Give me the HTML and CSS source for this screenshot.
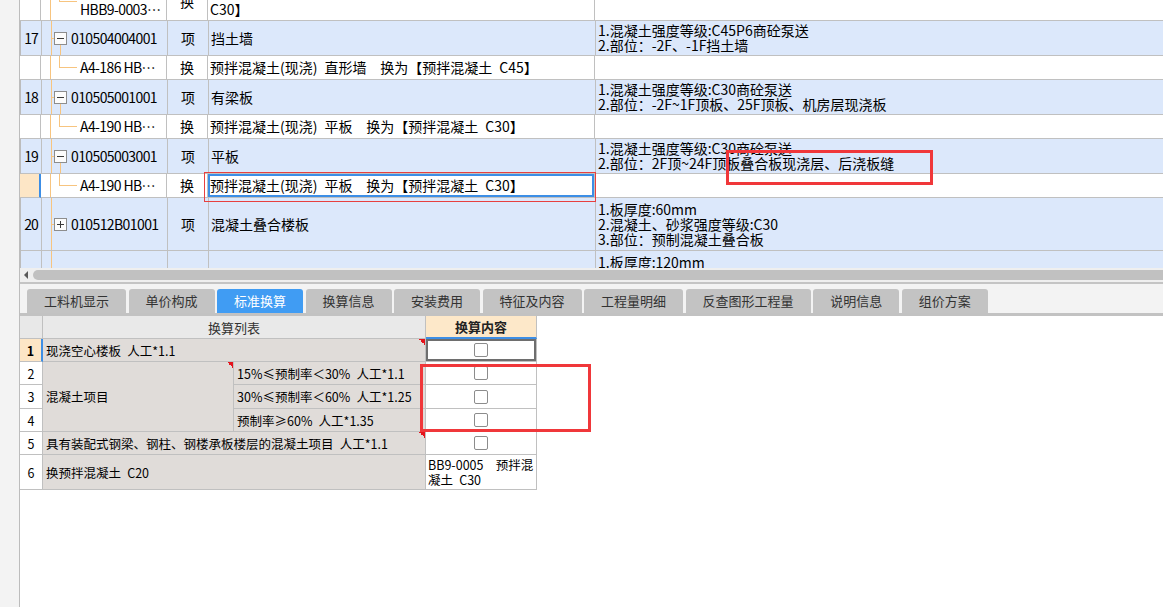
FILE: index.html
```html
<!DOCTYPE html>
<html lang="zh-CN">
<head>
<meta charset="utf-8">
<title>标准换算</title>
<link rel="stylesheet" href="styles.css">
</head>
<body>
<div class="app">
  <div class="side"></div>
  <div class="main">
    <div class="grid-view">
      <div class="row sub first">
        <div class="c-num"></div>
        <div class="c-code low"><span class="ln">HBB9-0003…</span></div>
        <div class="c-unit">换</div>
        <div class="c-desc low"><span class="ln">C30】</span></div>
        <div class="c-feat"></div>
      </div>
      <div class="row main open">
        <div class="c-num">17</div>
        <div class="c-code"><span class="exp"></span><span class="ln">010504004001</span></div>
        <div class="c-unit">项</div>
        <div class="c-desc"><span class="ln">挡土墙</span></div>
        <div class="c-feat"><span class="ln">1.混凝土强度等级:C45P6商砼泵送</span><span class="ln">2.部位：-2F、-1F挡土墙</span></div>
      </div>
      <div class="row sub">
        <div class="c-num"></div>
        <div class="c-code"><span class="ln">A4-186 HB…</span></div>
        <div class="c-unit">换</div>
        <div class="c-desc"><span class="ln">预拌混凝土(现浇) 直形墙  换为【预拌混凝土 C45】</span></div>
        <div class="c-feat"></div>
      </div>
      <div class="row main open">
        <div class="c-num">18</div>
        <div class="c-code"><span class="exp"></span><span class="ln">010505001001</span></div>
        <div class="c-unit">项</div>
        <div class="c-desc"><span class="ln">有梁板</span></div>
        <div class="c-feat"><span class="ln">1.混凝土强度等级:C30商砼泵送</span><span class="ln">2.部位：-2F~1F顶板、25F顶板、机房层现浇板</span></div>
      </div>
      <div class="row sub">
        <div class="c-num"></div>
        <div class="c-code"><span class="ln">A4-190 HB…</span></div>
        <div class="c-unit">换</div>
        <div class="c-desc"><span class="ln">预拌混凝土(现浇) 平板  换为【预拌混凝土 C30】</span></div>
        <div class="c-feat"></div>
      </div>
      <div class="row main open">
        <div class="c-num">19</div>
        <div class="c-code"><span class="exp"></span><span class="ln">010505003001</span></div>
        <div class="c-unit">项</div>
        <div class="c-desc"><span class="ln">平板</span></div>
        <div class="c-feat"><span class="ln">1.混凝土强度等级:C30商砼泵送</span><span class="ln">2.部位：2F顶~24F顶板叠合板现浇层、后浇板缝</span></div>
      </div>
      <div class="row sub sel">
        <div class="c-num"></div>
        <div class="c-code"><span class="ln">A4-190 HB…</span></div>
        <div class="c-unit">换</div>
        <div class="c-desc"><span class="ln">预拌混凝土(现浇) 平板  换为【预拌混凝土 C30】</span></div>
        <div class="c-feat"></div>
      </div>
      <div class="row main tall">
        <div class="c-num">20</div>
        <div class="c-code"><span class="exp plus"></span><span class="ln">010512B01001</span></div>
        <div class="c-unit">项</div>
        <div class="c-desc"><span class="ln">混凝土叠合楼板</span></div>
        <div class="c-feat"><span class="ln">1.板厚度:60mm</span><span class="ln">2.混凝土、砂浆强度等级:C30</span><span class="ln">3.部位：预制混凝土叠合板</span></div>
      </div>
      <div class="row main tall cut">
        <div class="c-num"></div>
        <div class="c-code"></div>
        <div class="c-unit"></div>
        <div class="c-desc"></div>
        <div class="c-feat"><span class="ln">1.板厚度:120mm</span></div>
      </div>
    </div>
    <div class="hscroll"><span class="arrow"></span><span class="thumb"></span></div>
    <div class="tabbar">
      <div class="tab">工料机显示</div>
      <div class="tab">单价构成</div>
      <div class="tab on">标准换算</div>
      <div class="tab">换算信息</div>
      <div class="tab">安装费用</div>
      <div class="tab">特征及内容</div>
      <div class="tab">工程量明细</div>
      <div class="tab">反查图形工程量</div>
      <div class="tab">说明信息</div>
      <div class="tab">组价方案</div>
    </div>
    <div class="detail">
      <div class="ctable">
        <div class="h-num"></div>
        <div class="h-list">换算列表</div>
        <div class="h-cont">换算内容</div>

        <div class="n sel">1</div>
        <div class="lab span2 tri"><span class="ln">现浇空心楼板 人工*1.1</span></div>
        <div class="chk-cell focus"><span class="chk"></span></div>

        <div class="n">2</div>
        <div class="lab span3 tri"><span class="ln">混凝土项目</span></div>
        <div class="lab"><span class="ln">15%≤预制率＜30% 人工*1.1</span></div>
        <div class="chk-cell"><span class="chk"></span></div>

        <div class="n">3</div>
        <div class="lab"><span class="ln">30%≤预制率＜60% 人工*1.25</span></div>
        <div class="chk-cell"><span class="chk"></span></div>

        <div class="n">4</div>
        <div class="lab"><span class="ln">预制率≥60% 人工*1.35</span></div>
        <div class="chk-cell"><span class="chk"></span></div>

        <div class="n">5</div>
        <div class="lab span2 tri"><span class="ln">具有装配式钢梁、钢柱、钢楼承板楼层的混凝土项目 人工*1.1</span></div>
        <div class="chk-cell"><span class="chk"></span></div>

        <div class="n">6</div>
        <div class="lab span2"><span class="ln">换预拌混凝土 C20</span></div>
        <div class="val"><span class="ln">BB9-0005  预拌混</span><span class="ln">凝土 C30</span></div>
      </div>
    </div>
  </div>
  <div class="mark mark-a"></div>
  <div class="mark mark-b"></div>
  <div class="mark mark-c"></div>
</div>
</body>
</html>
```

FILE: styles.css
```css
* { box-sizing: border-box; }
html, body { margin: 0; padding: 0; }
body {
  width: 1163px;
  height: 607px;
  overflow: hidden;
  background: #fff;
  color: #000;
  font-family: "Noto Sans CJK SC", "Noto Sans", sans-serif;
}
.app {
  position: relative;
  display: flex;
  width: 1163px;
  height: 607px;
  overflow: hidden;
}
.side { flex: none; width: 19px; background: #f3f3f3; }
.main {
  flex: 1;
  min-width: 0;
  display: flex;
  flex-direction: column;
  border-left: 1px solid #bcbcbc;
}

/* ---------- top grid ---------- */
.grid-view { flex: none; height: 268px; overflow: hidden; background: #fff; }
.row {
  display: grid;
  grid-template-columns: 21px 126px 41px 387px 1fr;
  height: 35px;
  font-size: 14px;
  line-height: 15px;
}
.row.sub { height: 24px; }
.row.tall { height: 53px; }
.row.first { height: 38px; margin-top: -17px; }
.row > div {
  display: flex;
  align-items: center;
  overflow: hidden;
  border-right: 1px solid #c0c0c0;
  border-bottom: 1px solid #c0c0c0;
  white-space: nowrap;
}
.ln { display: block; white-space: pre; }
.row.main > div { background-color: #dce8fb; }
.row > .c-num { justify-content: center; background-color: #fff; letter-spacing: -1px; }
.c-unit { justify-content: center; }
.row > .c-desc, .row > .c-feat {
  flex-direction: column;
  justify-content: center;
  align-items: flex-start;
  padding-left: 2px;
  word-spacing: 3.8px;
}
.row > .c-feat { border-right: 0; }
.row.cut > .c-feat { justify-content: flex-start; padding-top: 4px; }
.c-code { letter-spacing: -0.6px; }
.row > .low { padding-top: 15px; }

.row.main > .c-code {
  padding-left: 12px;
  background-image:
    linear-gradient(#f7c47f, #f7c47f),
    linear-gradient(#f7c47f, #f7c47f);
  background-size: 1px 100%, 3px 1px;
  background-position: 9px 0, 9px 50%;
  background-repeat: no-repeat;
}
.row.main.open > .c-code {
  background-image:
    linear-gradient(#f7c47f, #f7c47f),
    linear-gradient(#f7c47f, #f7c47f),
    linear-gradient(#f7c47f, #f7c47f);
  background-size: 1px 100%, 3px 1px, 1px 50%;
  background-position: 9px 0, 9px 50%, 18px 100%;
}
.row.sub > .c-code {
  padding-left: 39px;
  background-image:
    linear-gradient(#f7c47f, #f7c47f),
    linear-gradient(#f7c47f, #f7c47f),
    linear-gradient(#f7c47f, #f7c47f);
  background-size: 1px 100%, 1px 50%, 18px 1px;
  background-position: 9px 0, 18px 0, 18px 50%;
  background-repeat: no-repeat;
}
.exp {
  flex: none;
  width: 13px;
  height: 13px;
  margin-right: 4px;
  border: 1px solid #8d8d8d;
  background: #fcfcfc linear-gradient(#3a3a3a, #3a3a3a) center / 7px 1px no-repeat;
}
.exp.plus {
  background-image: linear-gradient(#3a3a3a, #3a3a3a), linear-gradient(#3a3a3a, #3a3a3a);
  background-size: 7px 1px, 1px 7px;
}
.row.sel > .c-num { background-color: #fde6c6; border-right: 2px solid #3c8ee6; }
.row.sel > .c-desc { box-shadow: inset 0 0 0 2px #3c8ee6; }

/* ---------- scrollbar ---------- */
.hscroll {
  flex: none;
  height: 16px;
  display: flex;
  align-items: center;
  background: #efefef;
  border-bottom: 2px solid #c4c4c4;
}
.arrow {
  flex: none;
  width: 0;
  height: 0;
  margin-left: 4px;
  border-top: 4px solid transparent;
  border-bottom: 4px solid transparent;
  border-right: 4px solid #5a5a5a;
}
.thumb {
  flex: 1;
  height: 10px;
  margin-left: 5px;
  background: #c1c1c1;
  border-radius: 5px 0 0 5px;
}

/* ---------- tabs ---------- */
.tabbar {
  flex: none;
  height: 32px;
  display: flex;
  align-items: flex-end;
  gap: 2.5px;
  padding-left: 7px;
  background: #f3f3f3;
  border-bottom: 3px solid #c2c2c2;
}
.tab {
  height: 24px;
  padding: 0 17px;
  line-height: 24px;
  font-size: 13px;
  color: #333;
  background: #c3c3c3;
  border-radius: 3px 3px 0 0;
  white-space: nowrap;
}
.tab.on { background: #409cf3; color: #fff; }

/* ---------- bottom table ---------- */
.detail { flex: 1; background: #fff; }
.ctable {
  display: grid;
  grid-template-columns: 23px 191px 192px 111px;
  grid-template-rows: 23px 23px 23px 24px 23px 23px 35px;
  font-size: 12.5px;
  line-height: 15px;
  width: 517px;
}
.ctable > div {
  display: flex;
  align-items: center;
  border-right: 1px solid #c0c0c0;
  border-bottom: 1px solid #c0c0c0;
  word-spacing: 3.4px;
  overflow: hidden;
}
.h-num { background: #e8e8e8; }
.h-list {
  grid-column: span 2;
  justify-content: center;
  background: #e9e9e9;
  font-size: 13px;
  color: #333;
}
.ctable > .h-cont {
  justify-content: center;
  background: #fde8c9;
  font-size: 13px;
  font-weight: bold;
  color: #222;
  border-bottom: 2px solid #3d8ee5;
}
.n { justify-content: center; background: #fff; }
.ctable > .n.sel { background: #fde6c6; font-weight: bold; border-right: 2px solid #3d8ee5; }
.lab { background: #e0dcd9; padding-left: 3px; }
.span2 { grid-column: span 2; }
.span3 { grid-row: span 3; }
.tri {
  background-image: linear-gradient(to bottom left, #e5141c 50%, transparent 50%);
  background-size: 6px 6px;
  background-position: right top;
  background-repeat: no-repeat;
}
.chk-cell { justify-content: center; background: #fff; }
.chk-cell.focus { box-shadow: inset 0 0 0 2px #6e6e6e; }
.chk {
  width: 14px;
  height: 14px;
  border: 1px solid #8c8c8c;
  border-radius: 2px;
  background: #fff;
}
.ctable > .val {
  flex-direction: column;
  justify-content: center;
  align-items: flex-start;
  padding-left: 2px;
  background: #fff;
}

/* ---------- annotation marks ---------- */
.mark { position: absolute; pointer-events: none; }
.mark-a { left: 204px; top: 172px; width: 392px; height: 30px; border: 1px solid #e8403f; }
.mark-b { left: 726px; top: 150px; width: 207px; height: 35px; border: 3px solid #f0373a; }
.mark-c { left: 420px; top: 364px; width: 171px; height: 68px; border: 3px solid #f0373a; }
```
